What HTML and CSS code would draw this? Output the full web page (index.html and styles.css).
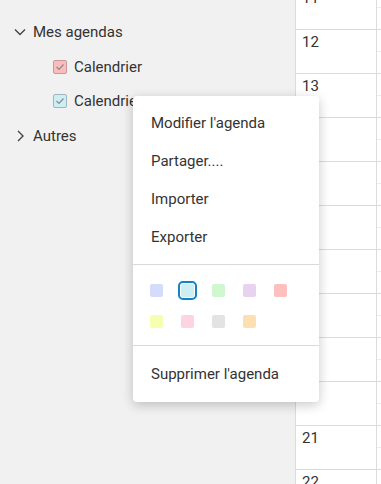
FILE: index.html
```html
<!DOCTYPE html>
<html lang="fr">
<head>
  <meta charset="UTF-8" />
  <meta name="viewport" content="width=device-width, initial-scale=1.0"/>
  <title>Agenda</title>
  <link rel="stylesheet" href="styles.css">
</head>
<body>
  <div class="layout">
    <!-- liste des agendas -->
    <aside class="sidebar">
      <div class="tree-row">
        <svg class="chevron" width="12" height="12" viewBox="0 0 12 12"><path d="M1 3.5 L6 8.5 L11 3.5" /></svg>
        <span>Mes agendas</span>
      </div>
      <div class="tree-row sub">
        <span class="check red"><svg width="10" height="10" viewBox="0 0 10 10"><path d="M1.5 5 L4 7.5 L8.5 2.5" /></svg></span>
        <span>Calendrier</span>
      </div>
      <div class="tree-row sub">
        <span class="check cyan"><svg width="10" height="10" viewBox="0 0 10 10"><path d="M1.5 5 L4 7.5 L8.5 2.5" /></svg></span>
        <span>Calendrier</span>
      </div>
      <div class="tree-row">
        <svg class="chevron" width="12" height="12" viewBox="0 0 12 12"><path d="M4 1 L9 6 L4 11" /></svg>
        <span>Autres</span>
      </div>
    </aside>

    <!-- jours -->
    <div class="days">
      <div class="day">11</div>
      <div class="day">12</div>
      <div class="day">13</div>
      <div class="day">14</div>
      <div class="day">15</div>
      <div class="day">16</div>
      <div class="day">17</div>
      <div class="day">18</div>
      <div class="day">19</div>
      <div class="day">20</div>
      <div class="day">21</div>
      <div class="day">22</div>
    </div>
    <div class="next-col">
      <div class="slot"></div><div class="slot"></div><div class="slot"></div>
      <div class="slot"></div><div class="slot"></div><div class="slot"></div>
      <div class="slot"></div><div class="slot"></div><div class="slot"></div>
      <div class="slot"></div><div class="slot"></div><div class="slot"></div>
    </div>
  </div>

  <!-- menu contextuel -->
  <div class="context-menu">
    <div class="menu-group">
      <div class="menu-item">Modifier l'agenda</div>
      <div class="menu-item">Partager....</div>
      <div class="menu-item">Importer</div>
      <div class="menu-item">Exporter</div>
    </div>
    <div class="swatches">
      <span class="swatch" style="background:#d5dbfa"></span>
      <span class="swatch selected" style="background:#cdeef3"></span>
      <span class="swatch" style="background:#cff7d0"></span>
      <span class="swatch" style="background:#e7d3ef"></span>
      <span class="swatch" style="background:#ffbfbf"></span>
      <span class="swatch" style="background:#f6ffb0"></span>
      <span class="swatch" style="background:#ffd4e2"></span>
      <span class="swatch" style="background:#e3e3e3"></span>
      <span class="swatch" style="background:#fde0b2"></span>
    </div>
    <div class="menu-group last">
      <div class="menu-item">Supprimer l'agenda</div>
    </div>
  </div>
</body>
</html>
```

FILE: styles.css
```css
body {
  margin: 0;
  font-family: Roboto, "Liberation Sans", sans-serif;
  font-size: 15px;
  color: #333;
  background-color: #fff;
  overflow: hidden;
  height: 484px;
  position: relative;
}

.layout {
  display: flex;
  height: 484px;
}

.sidebar {
  width: 295px;
  flex-shrink: 0;
  background-color: #f1f1f1;
  border-right: 1px solid #dcdcdc;
  padding-top: 15px;
}

.tree-row {
  display: flex;
  align-items: center;
  height: 34.6px;
  padding-left: 14px;
  gap: 7px;
}

.tree-row.sub {
  padding-left: 53px;
}

.chevron path {
  fill: none;
  stroke: #444;
  stroke-width: 1.4;
}

.check {
  width: 12px;
  height: 12px;
  border: 1px solid #b9a4a8;
  border-radius: 2px;
  display: flex;
  align-items: center;
  justify-content: center;
}

.check path {
  fill: none;
  stroke: #8c8c8c;
  stroke-width: 1.2;
}

.check.red {
  background-color: #fbbcbc;
  border-color: #c59a9f;
}

.check.cyan {
  background-color: #cdeef3;
  border-color: #9fb5bb;
}

.days {
  width: 80px;
  flex-shrink: 0;
  border-right: 1px solid #dcdcdc;
  margin-top: -15px;
}

.day {
  height: 40px;
  border-top: 1px solid #dcdcdc;
  padding: 3px 0 0 6px;
  line-height: 18px;
}

.next-col {
  flex: 1;
  margin-top: -15px;
}

.slot {
  height: 43px;
  border-top: 1px solid #dcdcdc;
  background: linear-gradient(to bottom, transparent 21px, #ececec 21px, #ececec 22px, transparent 22px);
}

/* menu contextuel */
.context-menu {
  position: absolute;
  left: 133px;
  top: 96px;
  width: 186px;
  height: 306px;
  box-sizing: border-box;
  background-color: #fff;
  border-radius: 4px;
  box-shadow: 0 3px 12px rgba(0, 0, 0, 0.22);
}

.menu-group {
  padding: 8px 0;
}

.menu-group.last {
  padding-top: 9px;
}

.menu-item {
  height: 38px;
  line-height: 38px;
  padding-left: 18px;
  color: #333;
}

.menu-group:first-child .menu-item {
  line-height: 39px;
}

.swatches {
  display: grid;
  grid-template-columns: repeat(5, 13px);
  grid-auto-rows: 13px;
  column-gap: 18px;
  row-gap: 18px;
  padding: 19px 17px 17px;
  border-top: 1px solid #d9d9d9;
  border-bottom: 1px solid #d9d9d9;
}

.swatch {
  width: 13px;
  height: 13px;
  border-radius: 2px;
}

.swatch.selected {
  outline: 2px solid #1582c6;
  outline-offset: 1px;
}
```
